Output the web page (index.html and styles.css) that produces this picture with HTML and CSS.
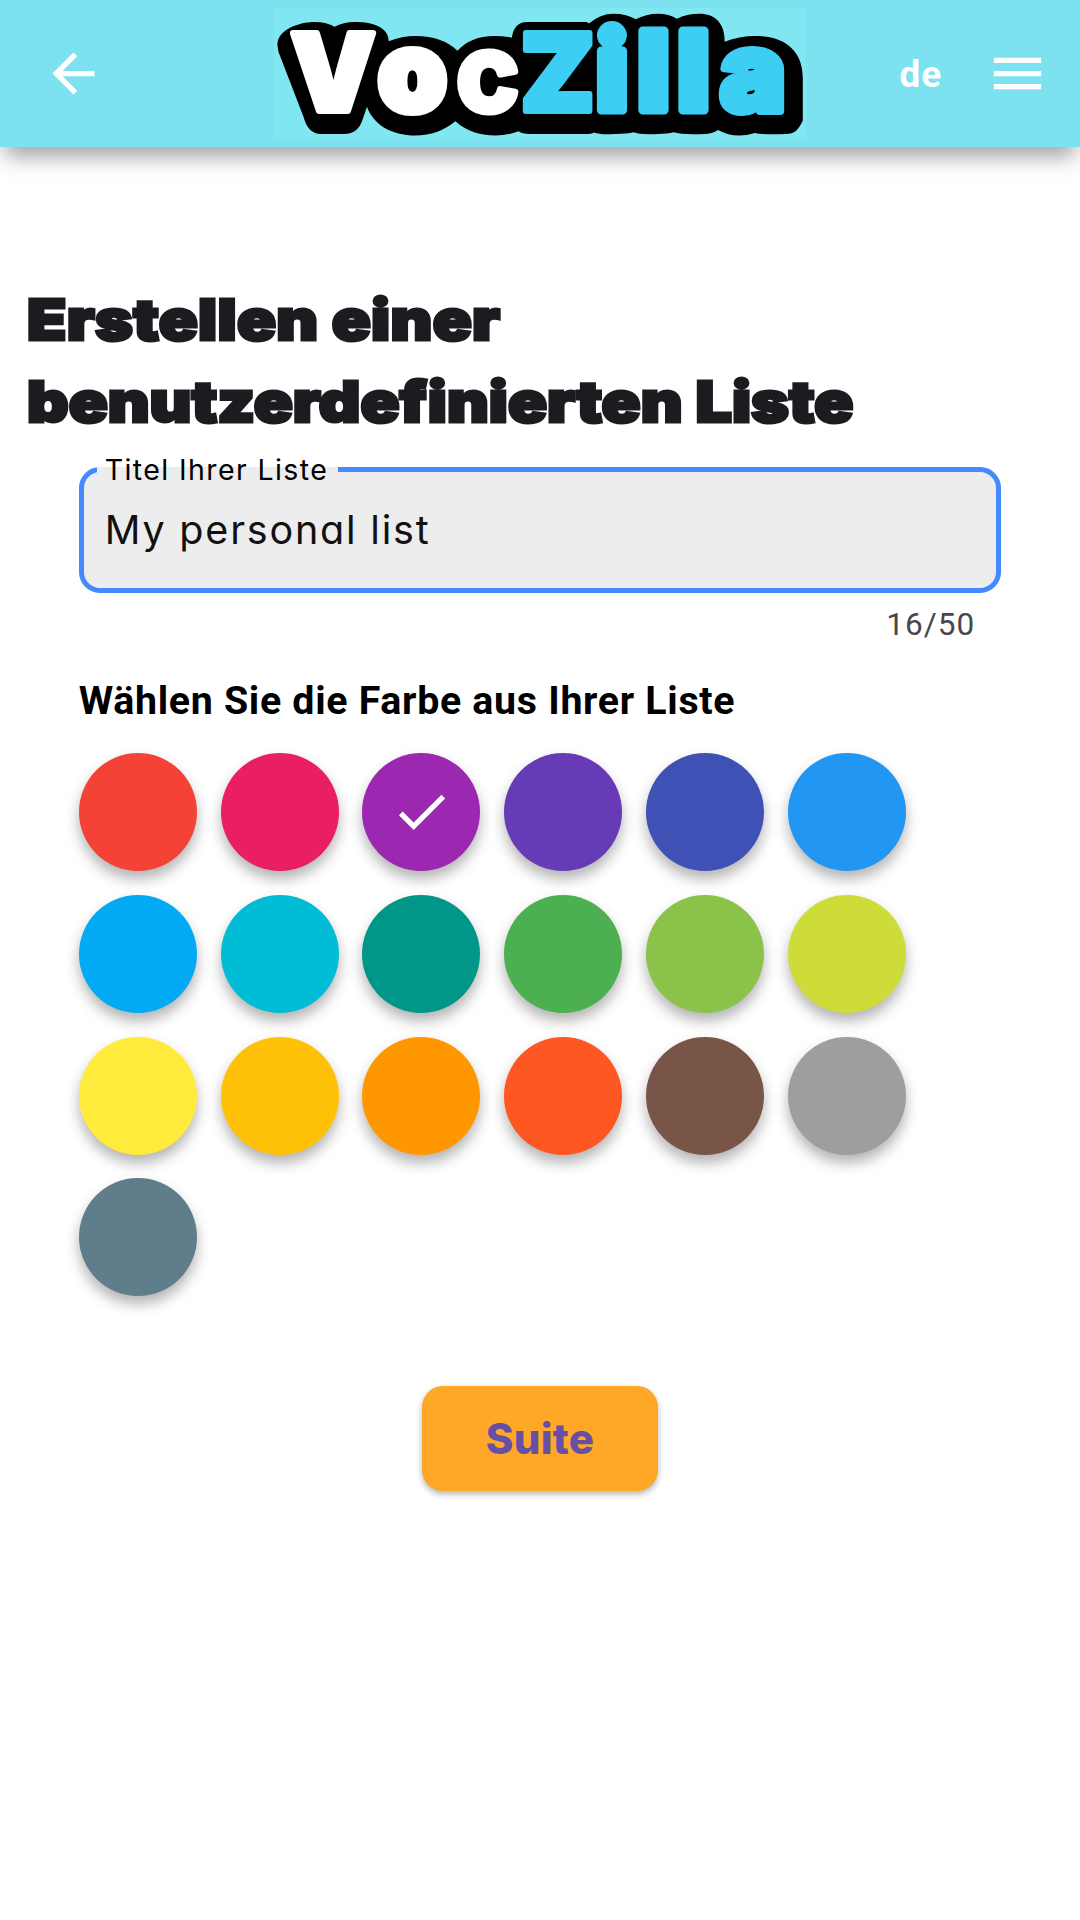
FILE: index.html
```html
<!DOCTYPE html>
<html lang="de">
<head>
<meta charset="utf-8">
<title>VocZilla</title>
<link rel="stylesheet" href="styles.css">
</head>
<body>
<header class="bar">
  <svg class="icon" viewBox="0 0 24 24"><path d="M20 11H7.83l5.59-5.59L12 4l-8 8 8 8 1.41-1.41L7.83 13H20z"/></svg>
  <svg class="logo" viewBox="274 8 532 131">
    <path d="M277.5 46C276 31 297 22 315 22Q327 22 334.600 26.700Q343 22 355 22C374 22 389 28 388.600 41.300Q402 36 415.700 36Q442 36 457.500 50.700Q471 36 494 36Q503 36 511.800 37.700Q514 22 527 22H586Q588 22 589 23.500Q600 13.700 613.600 13.700Q627 13.700 635.700 19.300Q646 13.700 658 13.700Q669 13.700 676.800 18.700Q687 13.700 699 13.700C716 13.700 725 24 724.600 41.700Q739 36 755.700 36C784 36 802.800 50 802.800 78V120.700C798 130 795 134 785.700 134Q766 135 754.600 133Q747 135.500 739 135.500Q728 135.500 718 130Q712 134 704.600 134Q682 135 673.600 132.300Q668 134 658 134Q640 135 633.500 132.300Q628 134 615 134Q600 135 594 132.500Q591 134 585 134H530Q522 134 518.600 131.300Q507 135.500 495.700 135.500Q471 135.500 455.400 121.300Q438 135.500 415.700 135.500C391 135.500 373 124 367 106.700L361.800 121.700Q357 134 344 134H321Q308 134 303.600 117L278.500 52Z"/>
    <text class="letters"><tspan class="cap white" x="290.500" y="111">V</tspan><tspan class="round white" x="378" y="110.500">o</tspan><tspan class="narrow white" x="456.500" y="110.500">c</tspan><tspan class="cap blue" x="520.500" y="111">Z</tspan><tspan class="stem blue" x="596 637.500 677.500" y="109.500">ill</tspan><tspan class="round blue" x="720" y="110.500">a</tspan></text>
  </svg>
  <div class="actions">
    <span class="lang">de</span>
    <svg class="icon" viewBox="0 0 24 24"><path d="M3 18h18v-2H3v2zm0-5h18v-2H3v2zm0-7v2h18V6H3z"/></svg>
  </div>
</header>
<main class="page">
  <h1 class="title"><span class="line first">Erstellen einer</span> <span class="line second">benutzerdefinierten Liste</span></h1>
  <div class="form">
    <fieldset class="field">
      <legend class="label">Titel Ihrer Liste</legend>
      <div class="value">My personal list</div>
    </fieldset>
    <div class="counter">16/50</div>
    <h2 class="subtitle">Wählen Sie die Farbe aus Ihrer Liste</h2>
    <div class="swatches">
      <i class="swatch red"></i><i class="swatch pink"></i>
      <i class="swatch purple"><svg class="icon" viewBox="0 0 24 24"><path d="M9 16.170L4.830 12l-1.420 1.410L9 19 21 7l-1.410-1.410z"/></svg></i>
      <i class="swatch deep-purple"></i><i class="swatch indigo"></i><i class="swatch sky"></i>
      <i class="swatch light-blue"></i><i class="swatch cyan"></i><i class="swatch teal"></i>
      <i class="swatch green"></i><i class="swatch light-green"></i><i class="swatch lime"></i>
      <i class="swatch yellow"></i><i class="swatch amber"></i><i class="swatch orange"></i>
      <i class="swatch deep-orange"></i><i class="swatch brown"></i><i class="swatch grey"></i>
      <i class="swatch blue-grey"></i>
    </div>
  </div>
  <button class="next">Suite</button>
</main>
</body>
</html>
```
FILE: styles.css
```css
* { box-sizing: border-box; }
body { margin: 0; min-height: 1920px; background: #fff; font-family: Roboto, sans-serif; }
.bar {
  display: grid;
  grid-template-columns: 274px 532px 274px;
  align-items: center;
  height: 147px;
  background: #7de2f0;
  box-shadow: 0 15px 20px -5px rgba(0, 0, 0, .36);
}
.icon { display: block; width: 63px; height: 63px; fill: #fff; }
.bar > .icon { margin-left: 42px; }
.logo { width: 532px; height: 131px; background: #80e7f2; overflow: visible; }
.letters {
  font-family: Inter, sans-serif;
  font-weight: 900;
  font-size: 110px;
  stroke-width: 6;
  stroke-linejoin: round;
}
.cap { font-size: 107px; }
.round { font-size: 110px; stroke-width: 8; }
.narrow { font-size: 106px; stroke-width: 7; font-weight: 700; }
.stem { font-size: 108px; stroke-width: 9; }
.white { fill: #fff; stroke: #fff; }
.blue { fill: #3dcff3; stroke: #3dcff3; }
.actions { display: flex; align-items: center; justify-content: flex-end; padding-right: 31px; gap: 44px; }
.lang { padding-top: 2px; color: #fff; font-size: 36.750px; font-weight: 700; letter-spacing: 1px; }
.page { display: flex; flex-direction: column; padding-top: 132px; }
.title {
  margin: 0;
  padding-left: 27px;
  font: 900 56px/82px Inter, sans-serif;
  color: #1d1b20;
  -webkit-text-stroke: 3px #1d1b20;
  white-space: nowrap;
}
.line { display: block; width: fit-content; transform: scaleX(1.150); transform-origin: 0 50%; }
.first { letter-spacing: .300px; }
.second { letter-spacing: .050px; }
.form { padding: 6px 78.750px 0; }
.field {
  height: 144px;
  margin: 0;
  padding: 0 21px;
  border: 5.250px solid #448aff;
  border-radius: 21px;
  background: #ededed;
}
.label {
  margin-left: -8px;
  padding: 1px 10px 0 8px;
  font: 400 28.500px/39px Inter, sans-serif;
  font-feature-settings: "cv11";
  letter-spacing: 1.400px;
  color: #000;
}
.value {
  padding-top: 16px;
  font: 400 39.500px/50px Inter, sans-serif;
  font-feature-settings: "cv11";
  letter-spacing: 1.800px;
  color: #111;
}
.counter {
  margin: 11px 26px 0 0;
  text-align: right;
  font-size: 31.500px;
  line-height: 42px;
  letter-spacing: 1.050px;
  color: #49454f;
}
.subtitle { margin: 30px 0 27px; font-size: 39.375px; line-height: 50px; font-weight: 700; letter-spacing: .680px; color: #000; }
.swatches { display: grid; grid-template-columns: repeat(6, 118.125px); gap: 23.625px; }
.swatch {
  display: grid;
  place-items: center;
  height: 118.125px;
  border-radius: 50%;
  box-shadow: 0 8px 14px rgba(0, 0, 0, .3);
}
.swatch .icon { margin-top: -1px; }
.red { background: #f44336; }
.pink { background: #e91e63; }
.purple { background: #9c27b0; }
.deep-purple { background: #673ab7; }
.indigo { background: #3f51b5; }
.sky { background: #2196f3; }
.light-blue { background: #03a9f4; }
.cyan { background: #00bcd4; }
.teal { background: #009688; }
.green { background: #4caf50; }
.light-green { background: #8bc34a; }
.lime { background: #cddc39; }
.yellow { background: #ffeb3b; }
.amber { background: #ffc107; }
.orange { background: #ff9800; }
.deep-orange { background: #ff5722; }
.brown { background: #795548; }
.grey { background: #9e9e9e; }
.blue-grey { background: #607d8b; }
.next {
  align-self: center;
  width: 236px;
  height: 105px;
  margin-top: 90px;
  padding: 0;
  border: 0;
  border-radius: 21px;
  background: #ffa726;
  box-shadow: 0 3px 6px rgba(0, 0, 0, .3);
  font: 800 42px/105px Inter, sans-serif;
  letter-spacing: .300px;
  color: #6750a4;
}
```
